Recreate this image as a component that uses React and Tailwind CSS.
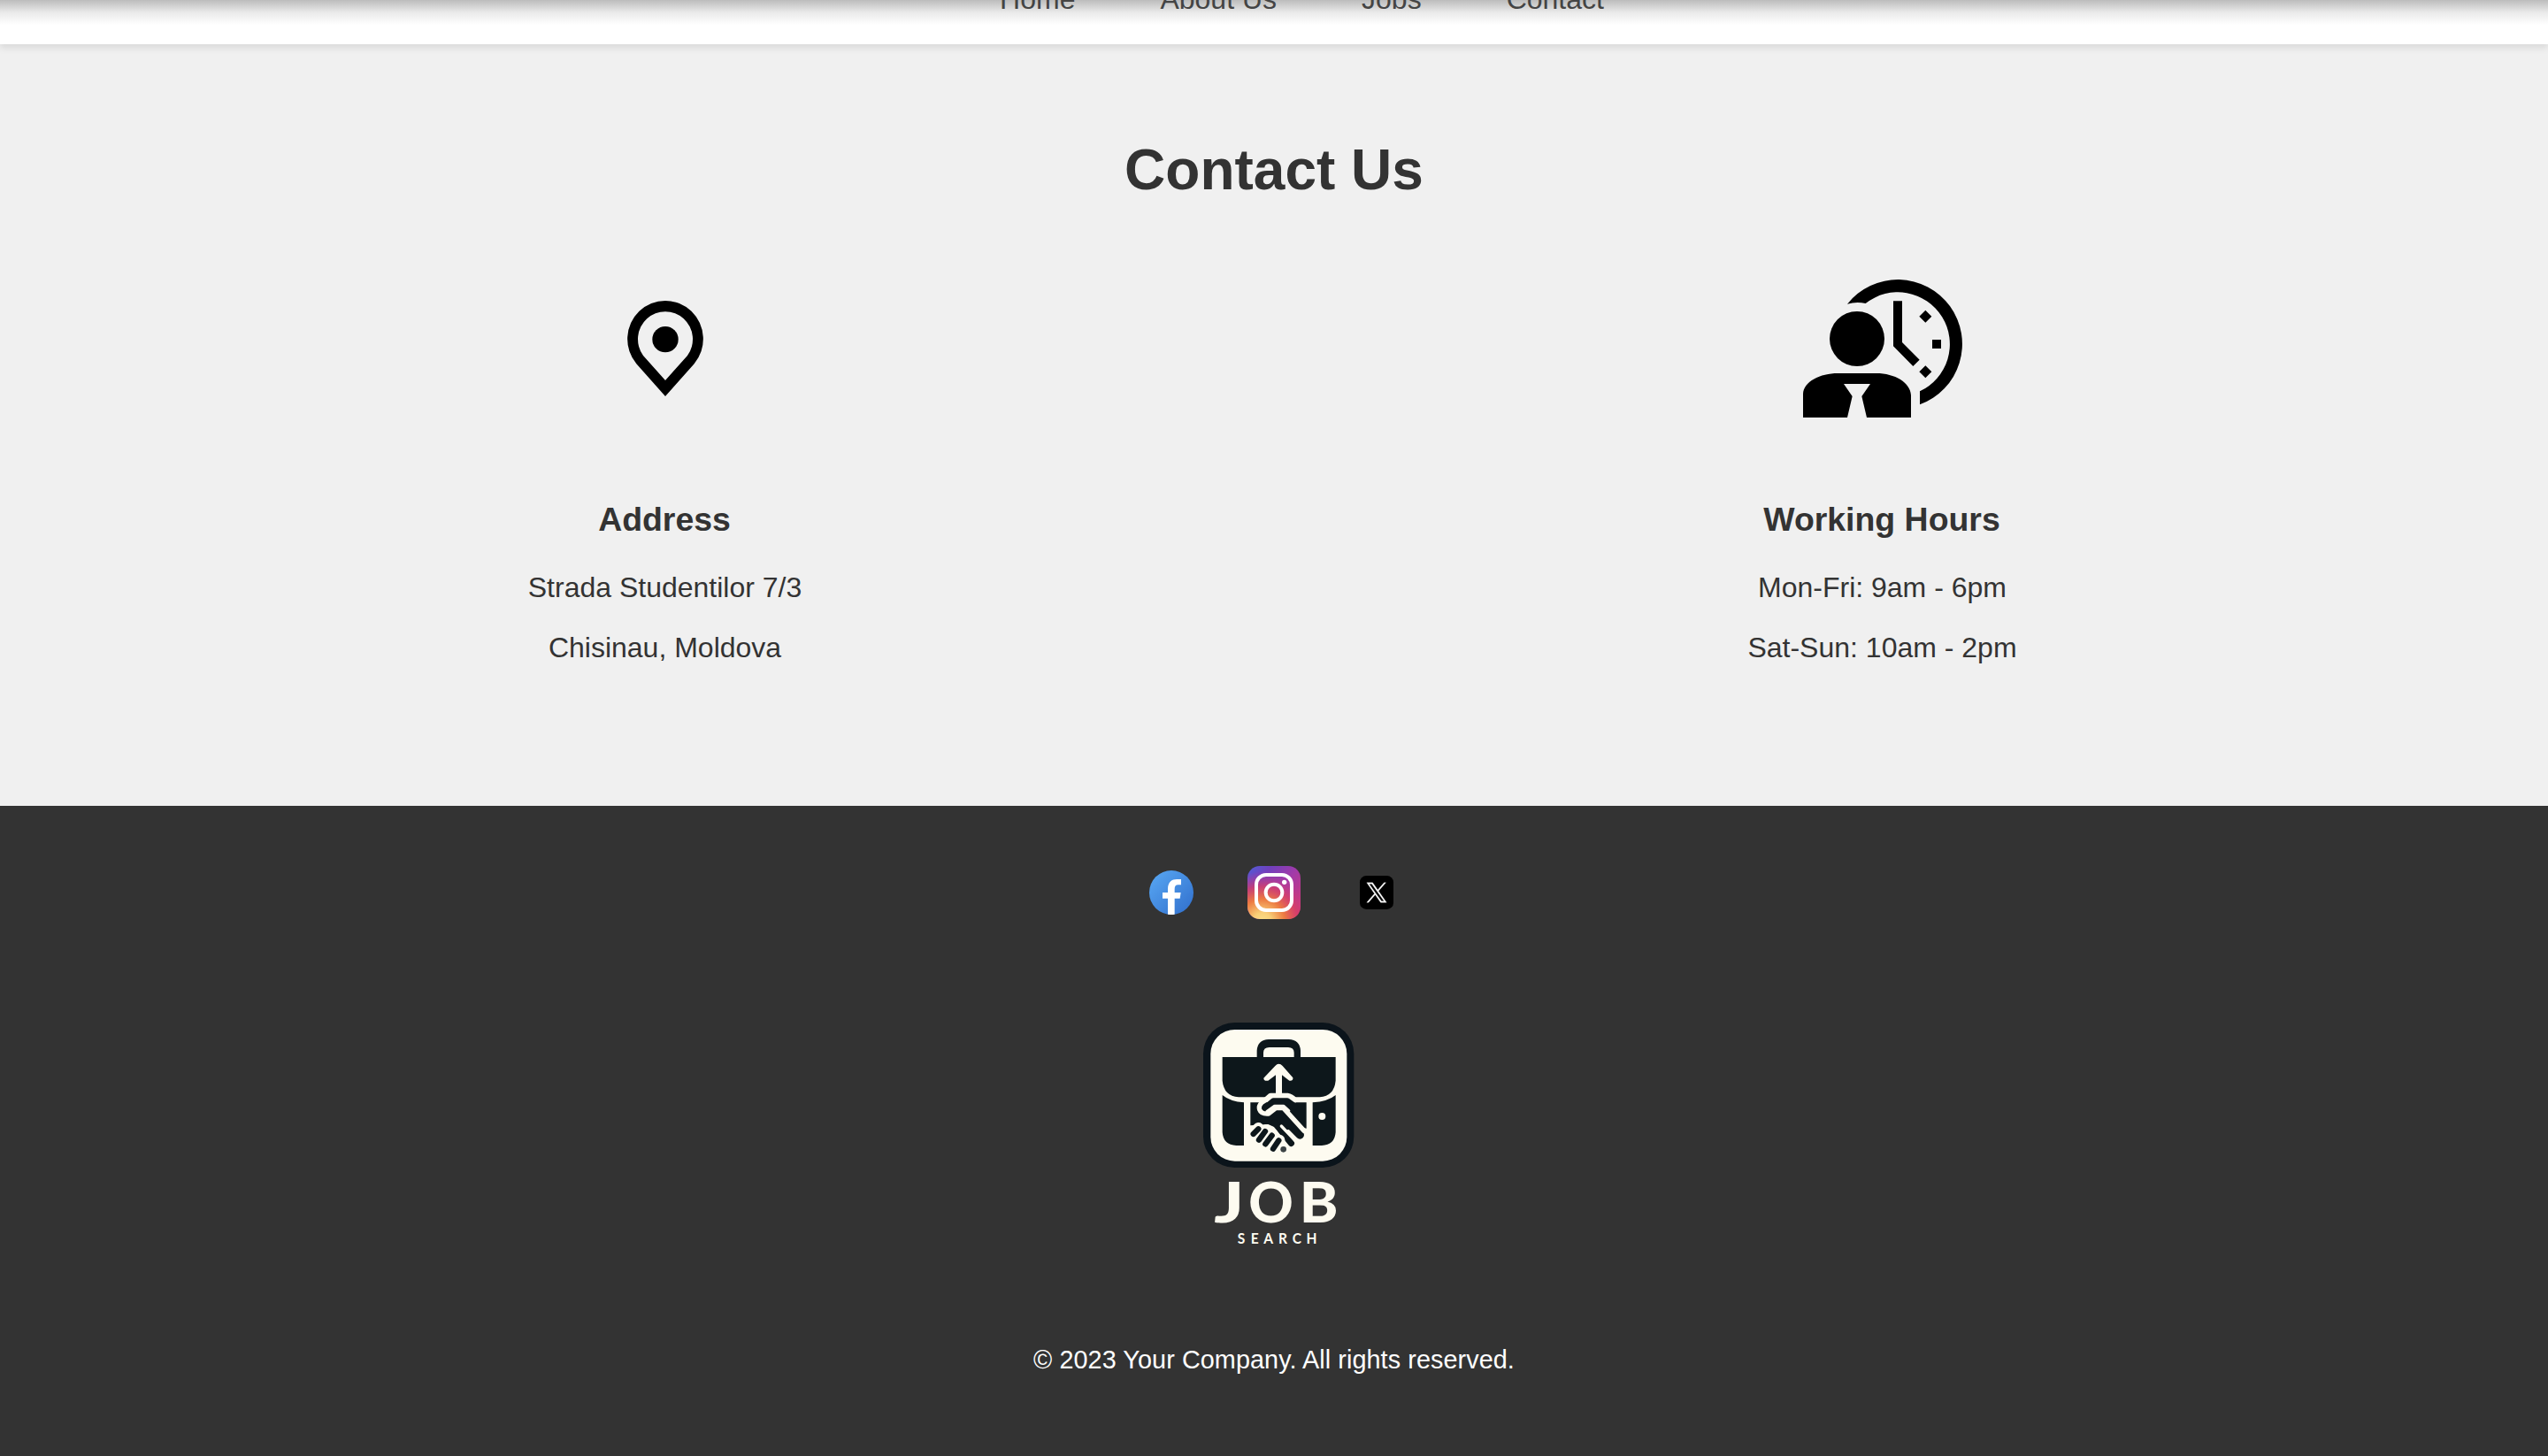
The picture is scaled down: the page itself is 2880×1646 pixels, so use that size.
const NAV = ["Home", "About Us", "Jobs", "Contact"];

function PinIcon() {
  return (
    <svg viewBox="0 0 390 420" className="mt-5 ml-[6px] h-[140px] w-[130px]">
      <path
        fillRule="evenodd"
        d="M186 384L88 274A128.5 130 0 1 1 284 274ZM186 330L261 246A93 94 0 1 0 111 246Z"
      />
      <circle cx="186" cy="191" r="44" />
    </svg>
  );
}

function HoursIcon() {
  return (
    <svg viewBox="0 0 660 570" className="ml-[4px] h-[190px] w-[220px]">
      <path d="M204 131A218.5 218.5 0 1 1 450 472V427A176.3 176.3 0 1 0 266 129Q235 122 204 131Z" />
      <path d="M360 121H390V261L449 320L427 342L360 274Z" />
      <path d="M469 152L490 173L469 194L448 173ZM469 340L490 361L469 382L448 361ZM492 252H522V282H492Z" />
      <circle cx="237" cy="249" r="93" />
      <path d="M54 516V436C56 394 112 366 172 366H302C366 366 418 398 420 440V516H270L253 444L282 402H192L221 444L204 516Z" />
    </svg>
  );
}

function FacebookIcon() {
  return (
    <svg viewBox="0 0 180 180" className="size-[60px]">
      <defs>
        <linearGradient id="fb" x1="0.1" y1="0.1" x2="0.9" y2="0.9">
          <stop offset="0" stopColor="#55a3f0" />
          <stop offset="1" stopColor="#3474d0" />
        </linearGradient>
      </defs>
      <circle cx="90" cy="90" r="75" fill="url(#fb)" />
      <path
        fill="#fff"
        d="M78 164V110H60V90H78V78C78 54 92 45 108 45H123V64H113C104 64 101 69 101 78V90H122L119 110H101V164Q90 166 78 164Z"
      />
    </svg>
  );
}

function InstagramIcon() {
  return (
    <svg viewBox="0 0 180 180" className="size-[60px]">
      <defs>
        <linearGradient id="igBase" x1="0" y1="0" x2="1" y2="0.9">
          <stop offset="0" stopColor="#4f5fd8" />
          <stop offset="0.25" stopColor="#7040bd" />
          <stop offset="0.55" stopColor="#a33aa8" />
          <stop offset="1" stopColor="#d03a70" />
        </linearGradient>
        <radialGradient id="igWarm" cx="0.28" cy="1.05" r="0.95">
          <stop offset="0" stopColor="#fbe08a" />
          <stop offset="0.18" stopColor="#f9cf77" />
          <stop offset="0.45" stopColor="#ec7b42" />
          <stop offset="0.7" stopColor="#d93f66" stopOpacity="0.8" />
          <stop offset="1" stopColor="#c0389a" stopOpacity="0" />
        </radialGradient>
      </defs>
      <rect width="180" height="180" rx="42" fill="url(#igBase)" />
      <rect width="180" height="180" rx="42" fill="url(#igWarm)" />
      <rect x="30" y="30" width="120" height="120" rx="33" fill="none" stroke="#fff" strokeWidth="12" />
      <circle cx="90" cy="90" r="28" fill="none" stroke="#fff" strokeWidth="12" />
      <circle cx="125" cy="55" r="8" fill="#fff" />
    </svg>
  );
}

function XIcon() {
  return (
    <svg viewBox="0 0 180 180" className="size-[60px]">
      <rect x="33" y="33" width="114" height="114" rx="22" />
      <g transform="translate(56.5 56.5) scale(2.8)" fill="#fff" stroke="#fff" strokeWidth="0.35">
        <path d="M14.258 10.152L23.176 0h-2.113l-7.747 8.813L7.133 0H0l9.352 13.328L0 23.973h2.113l8.176-9.309 6.531 9.309h7.133zm-2.895 3.293l-.949-1.328L2.875 1.56h3.246l6.086 8.523.945 1.328 7.91 11.078h-3.246z" />
      </g>
    </svg>
  );
}

function Logo() {
  const dark = "#0d171b";
  const cream = "#fdfbf0";
  return (
    <svg viewBox="0 0 570 825" className="h-[275px] w-[190px]">
      <rect x="30" y="33" width="511" height="492" rx="106" fill="#0b141b" />
      <rect x="55" y="57" width="462" height="446" rx="82" fill={cream} />
      <g fill={dark}>
        <path
          fillRule="evenodd"
          d="M212 152V128Q214 92 252 90H320Q358 92 360 128V152ZM234 150H338V135Q338 117 318 117H254Q234 117 234 135Z"
        />
        <path d="M95 150H479V230Q474 282 425 286H150Q100 282 95 230Z" />
        <path d="M95 279Q122 301 168 304V450H142Q98 448 95 405Z" />
        <path d="M479 279Q452 301 401 304V450H432Q476 448 479 405Z" />
        <path d="M190 304H380V392L360 388L300 400L250 378L190 382Z" />
      </g>
      <path
        d="M286 173Q293 173 299 180L334 220Q336 232 322 230L297 211V278H276V211L250 230Q234 232 235 221L274 180Q280 173 286 173Z"
        fill={cream}
      />
      <circle cx="433" cy="351" r="12" fill={cream} />
      <g strokeLinecap="round" strokeLinejoin="round" fill="none">
        <path d="M290 345L358 414" stroke={dark} strokeWidth="28" />
        <path d="M272 372L328 442" stroke={dark} strokeWidth="22" />
        <path d="M235 300L258 280H316Q330 282 342 296" stroke={cream} strokeWidth="16" />
        <path d="M236 298Q216 312 221 328Q226 342 246 342H252L276 323H302L372 400" stroke={cream} strokeWidth="16" />
        <path d="M242 322L268 300H315L340 318" stroke={dark} strokeWidth="22" />
        <path d="M246 335L272 316H302L320 332" stroke={cream} strokeWidth="10" />
        <path d="M295 384L342 434" stroke={cream} strokeWidth="10" />
        <path d="M217 391L201 410M241 398L218 429M265 412L241 443M288 432L266 460" stroke={cream} strokeWidth="38" />
        <path d="M217 394L200 411M240 402L219 431M263 416L241 445M286 433L267 461" stroke={dark} strokeWidth="19" />
      </g>
      <circle cx="302" cy="463" r="10" fill="#3c4345" />
      <g fill={cream} fontFamily="Lato, sans-serif">
        <g fontSize="187" fontWeight="900">
          <text transform="translate(67 710) scale(1.26 1)">J</text>
          <text x="184" y="710">O</text>
          <text transform="translate(356 710) scale(1.06 1)">B</text>
        </g>
        <text
          transform="translate(0 783) scale(0.88 1)"
          x="166 217 267 324 378 431"
          y="0"
          fontSize="53"
          fontWeight="700"
        >
          SEARCH
        </text>
      </g>
    </svg>
  );
}

function ContactCard({ icon, title, lines }) {
  return (
    <div className="flex flex-col items-center">
      <div className="flex h-[190px] items-start justify-center">{icon}</div>
      <h3 className="mt-[75px] mr-[2px] text-[37.44px] leading-[44px] font-bold">{title}</h3>
      <div className="mt-[37px] mr-px flex flex-col items-center gap-8 text-[32px] leading-9">
        {lines.map((line) => (
          <p key={line}>{line}</p>
        ))}
      </div>
    </div>
  );
}

export default function App() {
  return (
    <div className="flex h-[1646px] flex-col overflow-hidden bg-[#f0f0f0] font-['Liberation_Sans',Arial,sans-serif] text-[#333]">
      <header className="relative z-10 h-[50px] shrink-0 bg-white bg-linear-to-b from-[#bcbcbc] via-[#eaeaea] via-28% to-white to-56% shadow-[0_4px_8px_rgba(0,0,0,0.1)]">
        <nav className="-mt-[19px] flex justify-center gap-24 pl-[63px] text-[32px] leading-9 text-[#444]">
          {NAV.map((item) => (
            <a key={item}>{item}</a>
          ))}
        </nav>
      </header>
      <main className="h-[861px] shrink-0 px-16 pt-[106px]">
        <h1 className="text-center text-[64px] leading-[72px] font-bold">Contact Us</h1>
        <div className="mt-[72px] grid grid-cols-2">
          <ContactCard icon={<PinIcon />} title="Address" lines={["Strada Studentilor 7/3", "Chisinau, Moldova"]} />
          <ContactCard icon={<HoursIcon />} title="Working Hours" lines={["Mon-Fri: 9am - 6pm", "Sat-Sun: 10am - 2pm"]} />
        </div>
      </main>
      <footer className="flex grow flex-col items-center bg-[#333] pt-[68px] text-white">
        <div className="flex gap-14">
          <FacebookIcon />
          <InstagramIcon />
          <XIcon />
        </div>
        <div className="mt-[106px] pl-[10px]">
          <Logo />
        </div>
        <p className="mt-[101px] text-[28.8px] leading-8 tracking-[0.07px]">© 2023 Your Company. All rights reserved.</p>
      </footer>
    </div>
  );
}
